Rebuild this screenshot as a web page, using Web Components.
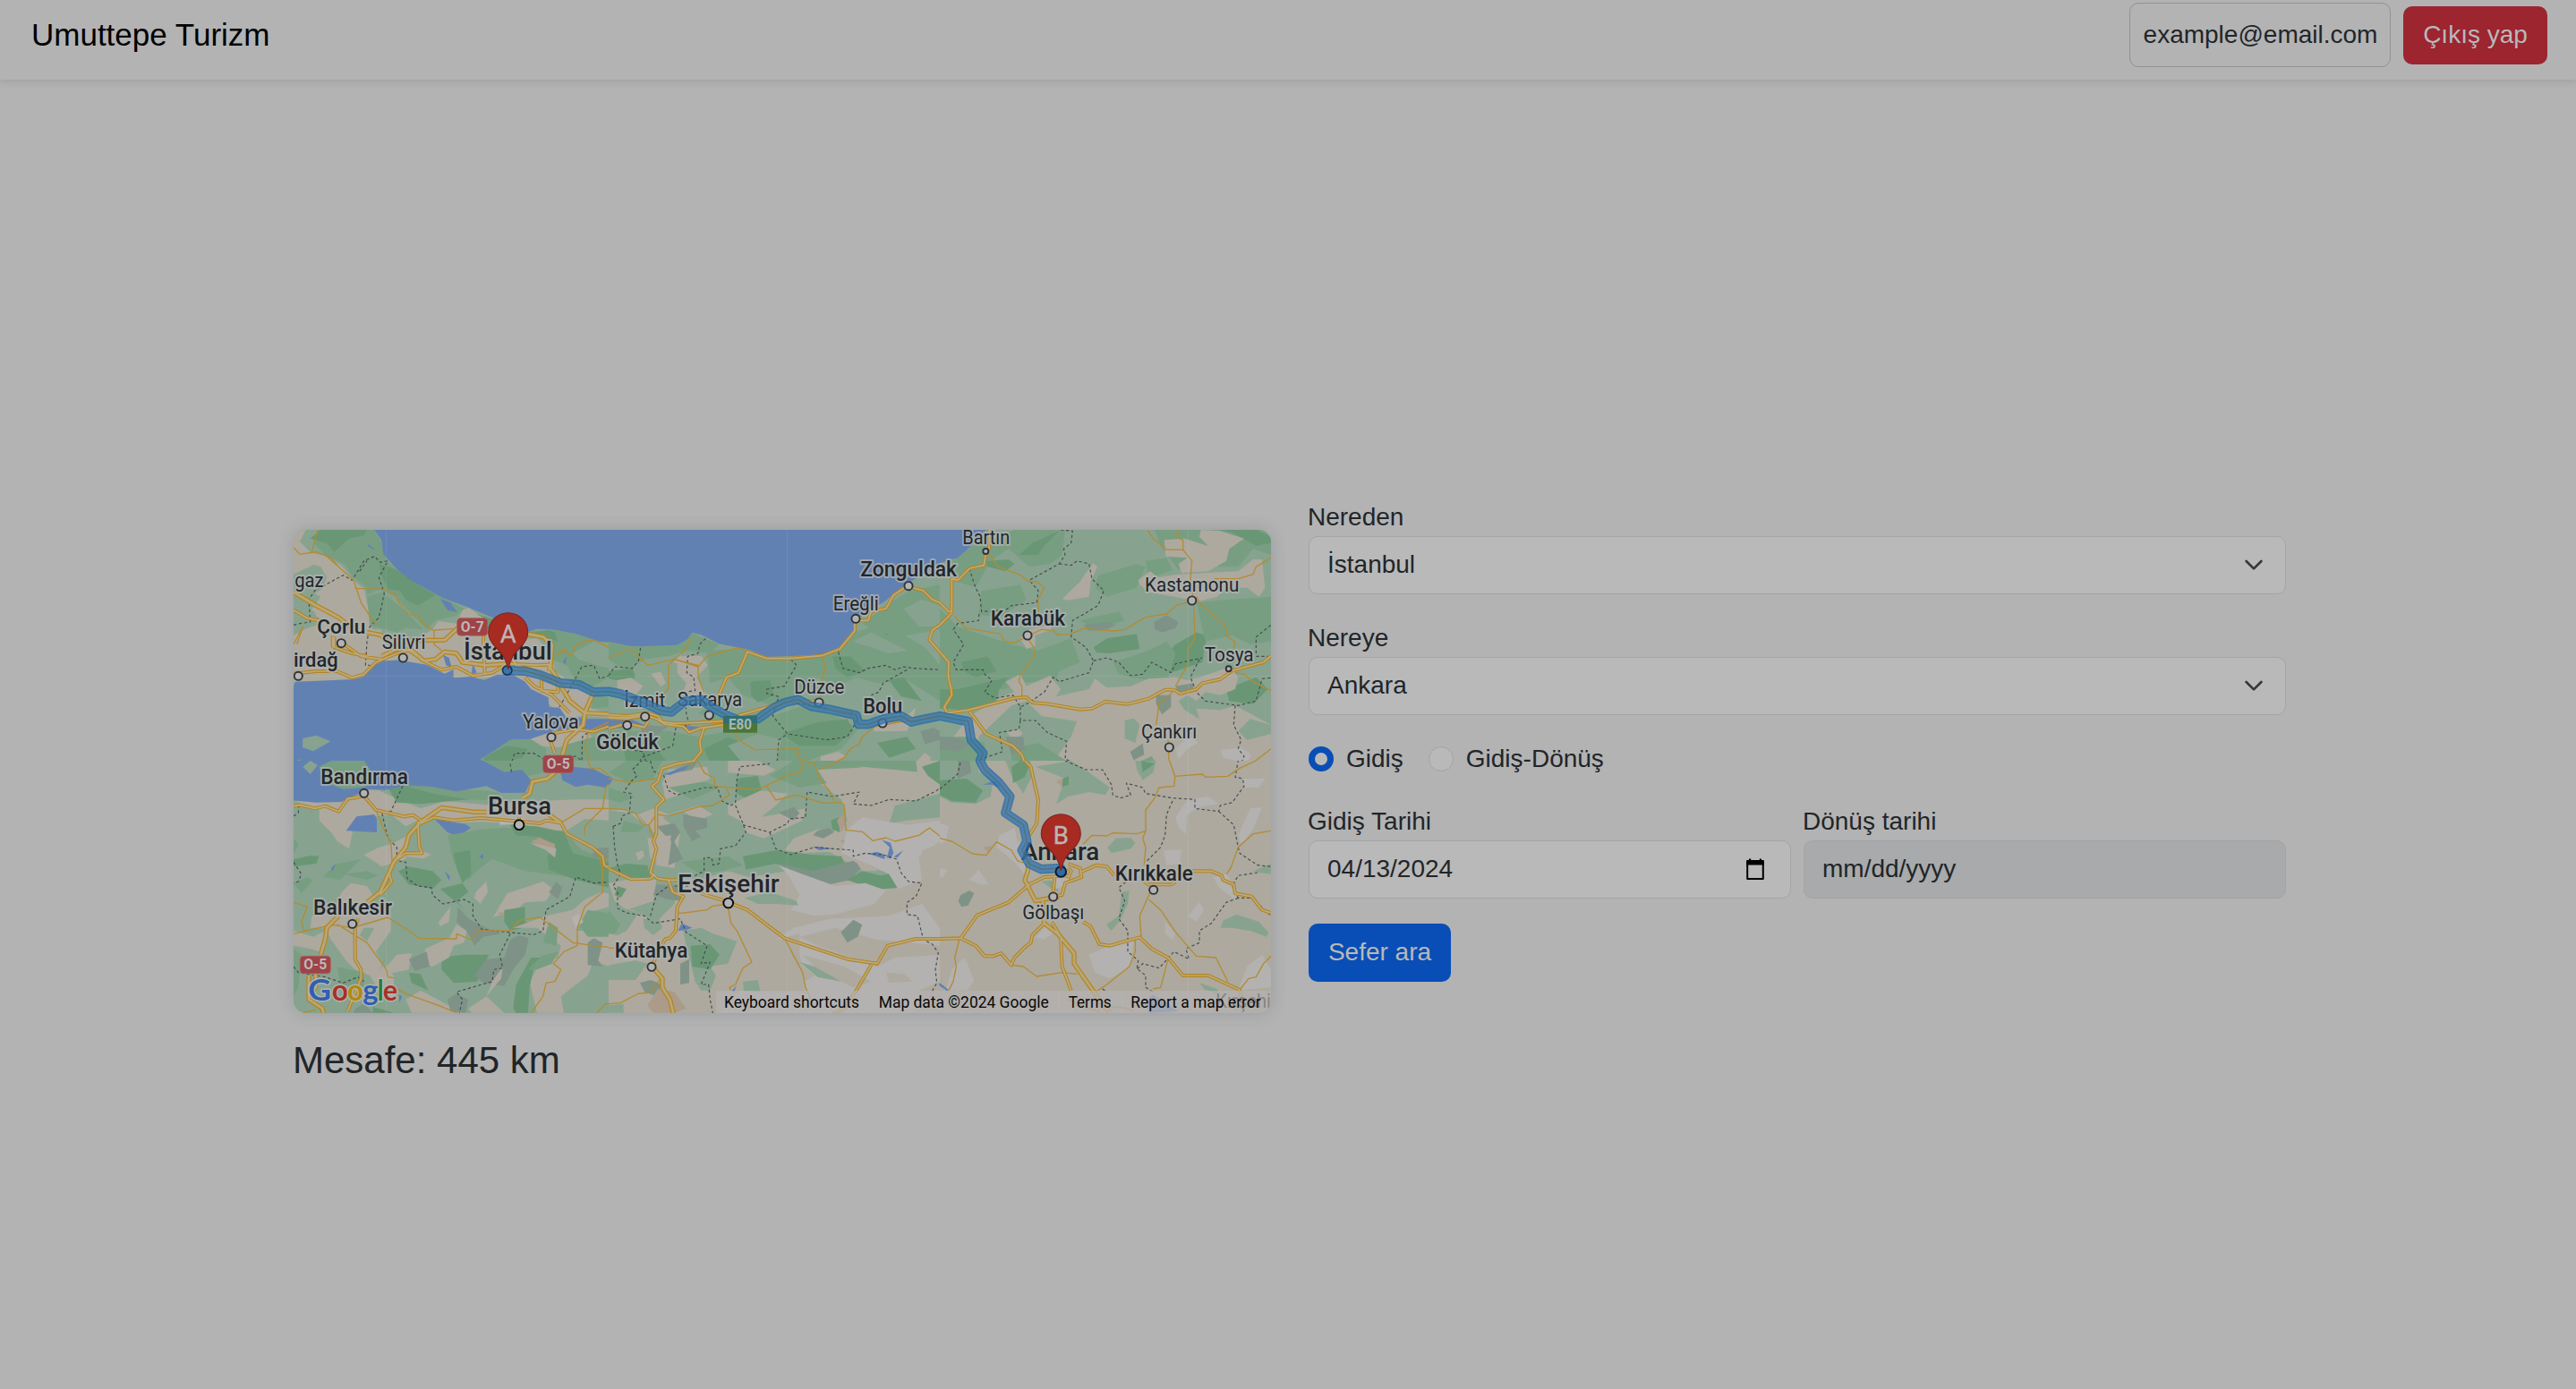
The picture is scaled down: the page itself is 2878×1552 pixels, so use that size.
<!DOCTYPE html>
<html lang="tr">
<head>
<meta charset="utf-8">
<title>Umuttepe Turizm</title>
<style>
html,body{margin:0;height:100%}
body{background:#b3b3b3;font:28px/42px "Liberation Sans",Arial,sans-serif;color:#212529;overflow:hidden}
</style>
</head>
<body>
<trip-page></trip-page>
<script>
const define = (name, html, after) => customElements.define(name, class extends HTMLElement {
  connectedCallback() {
    if (this.shadowRoot) return;
    const root = this.attachShadow({mode: 'open'});
    const t = document.createElement('template');
    t.innerHTML = html;
    root.append(t.content.cloneNode(true));
    if (after) after(root, this);
  }
});

define('ui-button', `<style>
:host{display:flex;align-items:center;justify-content:center;box-sizing:border-box;height:65px;padding-bottom:1px;border-radius:10px;background:var(--fill,#094eb6);color:#b9b9b9;white-space:nowrap}
</style><slot></slot>`);

define('app-navbar', `<style>
:host{display:flex;box-sizing:border-box;height:89px;padding:3px 32px 14px 35px;align-items:center;background:#b3b3b3;box-shadow:0 3px 8px rgba(0,20,10,.10)}
.brand{font-size:35px;color:#000;flex:1;white-space:nowrap}
.mail{box-sizing:border-box;width:292px;height:72px;border:1px solid #929292;border-radius:10px;display:flex;align-items:center;justify-content:center;padding-left:1px;margin-right:14px}
ui-button{--fill:#9c2530;width:161px}
</style><div class="brand">Umuttepe Turizm</div><div class="mail">example@email.com</div><ui-button>Çıkış yap</ui-button>`);

define('form-field', `<style>
:host{display:block;flex:1}
.label{box-sizing:border-box;height:43px;padding-top:1px;margin-left:-1px;white-space:nowrap}
.box{box-sizing:border-box;height:65px;border:1px solid #a3a4a5;border-radius:10px;background:#b9b9b9;display:flex;align-items:center;justify-content:space-between;padding:0 21px 2px 20px}
:host([disabled]) .box{background:#a8aaab;border-color:#a1a3a6}
:host([icon="date"]) .box{padding-right:25px}
svg{display:block;flex:none}
</style><div class="label"></div><div class="box"><slot></slot></div>`, (root, host) => {
  root.querySelector('.label').textContent = host.getAttribute('label');
  const box = root.querySelector('.box'), icon = host.getAttribute('icon');
  if (icon === 'chevron') box.insertAdjacentHTML('beforeend', '<svg width="28" height="21" viewBox="0 0 16 12"><path d="M3.2 4l4.800 4.800 4.800-4.800" fill="none" stroke="#33373b" stroke-width="1.500" stroke-linecap="round" stroke-linejoin="round"/></svg>');
  if (icon === 'date') box.insertAdjacentHTML('beforeend', '<svg width="28" height="28" viewBox="0 0 28 28"><path d="M5.2 5h17.6v20H5.2z" fill="none" stroke="#000" stroke-width="2" stroke-linejoin="round"/><path d="M4.2 4.500h19.6v5H4.200zM7 2.500h2.200v3H7zM18.800 2.500H21v3h-2.200z"/></svg>');
});

define('radio-option', `<style>
:host{display:flex;align-items:center;gap:14px;height:42px}
i{box-sizing:border-box;width:28px;height:28px;border-radius:50%;border:1px solid #a2a4a5;background:#b9b9b9}
:host([checked]) i{border:7.5px solid #094eb6}
</style><i></i><span><slot></slot></span>`);

define('trip-form', `<style>
:host{display:flex;flex-direction:column;width:1092px}
.gap{margin-top:27px}
.radios{display:flex;gap:28px;margin-top:28px}
.dates{display:flex;gap:14px}
ui-button{width:159px;margin-top:28px}
</style>
<form-field label="Nereden" icon="chevron">İstanbul</form-field>
<form-field class="gap" label="Nereye" icon="chevron">Ankara</form-field>
<div class="radios"><radio-option checked>Gidiş</radio-option><radio-option>Gidiş-Dönüş</radio-option></div>
<div class="dates gap"><form-field label="Gidiş Tarihi" icon="date">04/13/2024</form-field><form-field label="Dönüş tarihi" disabled>mm/dd/yyyy</form-field></div>
<ui-button>Sefer ara</ui-button>`);

/* Map tiles: three units of tile space make one page pixel.
   Fills: w water, a light green, g green, d dark green, t sand, l pale, s slate, o clay.
   Lines: H motorway, M main road, S minor road, B border. */
const C = {w:'#6281b3', a:'#87a38f', g:'#789e82', d:'#699775', t:'#ada99e', l:'#b3b2b0', s:'#7f9287', o:'#ab9b88'};
const TILES = [
{x:310,y:570,w:370,h:280,base:'a',f:`
t 54,66 95,66 75,105 110,142 165,155 215,185 255,235 290,265 305,330 318,400 345,400 370,460 430,455 520,400 540,372 600,380 620,335 640,328 700,365 740,375 740,440 870,430 920,480 930,540 1000,590 1060,620 1020,690 960,700 900,640 820,590 740,560 590,570 500,525 400,500 310,525 280,565 54,578 54,420 100,395 135,385 125,340 95,325 105,290 150,265 165,225 145,190 120,182 54,225
a 54,215 95,195 115,215 100,260 54,280
a 54,285 110,270 145,290 110,340 150,370 100,385 54,400
g 135,66 325,66 350,110 372,175 400,200 450,238 550,290 625,330 600,355 530,370 500,400 450,350 395,290 340,265 300,285 300,260 250,222 225,180 165,155 120,110
d 110,95 145,66 300,66 290,85 240,95 190,140 165,110
d 340,180 400,200 480,255 530,285 470,320 430,300 410,270 370,265 350,220
g 300,290 350,275 395,310 440,350 490,400 430,395 400,410 350,395 310,390
d 600,365 640,340 740,370 720,400 700,400 700,365
t 595,385 625,335 640,330 670,350 700,365 605,360
g 840,405 920,400 1000,415 1110,440 1110,560 1060,590 1000,575 970,520 920,500 915,430
d 850,410 910,402 930,410 940,440 900,430
a 990,480 1060,440 1110,445 1110,530 1070,520 1010,500
g 1050,610 1110,630 1110,660 1055,665
w 325,66 1110,66 1110,442 1080,440 1000,415 920,400 870,398 840,407 740,368 640,326 555,295 520,275 450,237 402,200 355,148 348,100
w 545,297 580,310 603,343 570,335
w 303,112 330,135 305,122
w 555,485 575,495 585,530 565,520
w 655,515 668,545 650,550
w 970,490 965,520 957,508
t 640,326 668,350 630,340
w 54,590 60,575 250,568 290,558 315,525 355,505 410,503 500,518 560,548 590,535 590,562 650,558 692,570 735,552 785,550 830,575 850,600 908,628 910,660 945,662 965,690 1010,695 1035,700 1110,700 1110,735 1040,738 930,738 850,768 780,770 735,805 680,835 700,850 54,850
t 1035,660 1110,680 1110,695 1030,690
t 845,768 930,740 1040,742 1060,770 940,795 880,790
g 780,770 850,768 900,800 900,845 700,850 682,835
d 690,830 745,800 770,790 840,800 820,830 740,850 700,850
g 955,790 1060,760 1110,800 1110,845 950,845
a 85,765 130,755 178,775 120,808 84,795
g 54,850 72,835 88,845 80,860
g 160,850 185,845 300,855 320,870`,
l:`
H 54,275 130,320 205,360 250,395
H 300,410 345,418 370,440 500,436 560,436 605,395 650,372
M 54,335 100,362 140,370
M 54,548 130,540 200,540 250,562 290,550 330,510 400,480 440,470 500,510 550,535 600,525 655,555 720,545 770,515 870,520
H 350,490 400,465 450,470 490,505 530,500 560,475 600,480 620,510 700,520 770,515
M 185,420 185,460 M
M 210,440 280,490 350,500
M 190,425 190,460 250,480 300,490
M 695,380 690,440 695,550
H 840,415 890,425 920,450 915,530 950,580
H 760,450 800,520 880,550 950,590 980,640 1030,680 1110,684
M 845,520 910,518 910,540
M 830,560 860,590 920,620 980,680
M 885,570 885,605 940,610 940,580
H 1060,610 1030,680 1025,720 970,770 955,820
M 1110,725 1060,742 1000,735 940,745 910,760 930,815
S 54,125 75,148 130,140 180,160 205,190 255,235 280,310 330,385
S 135,66 115,140
S 165,155 200,185
S 260,262 350,265 395,280 410,315 440,350 470,352 490,380 525,405 525,450 550,470
S 525,402 590,398
S 54,450 85,390 65,450
S 930,465 960,470 985,490 1000,455 1040,435 1070,440 1110,460
S 930,490 970,465
S 1110,710 1045,740 1030,790 1050,850
B 54,385 75,380 110,375 105,300 125,270 220,218 250,235 290,170 325,155 345,175 370,170 340,225 358,280 340,360 310,390 300,440 295,520 310,520
B 275,205 300,170
B 945,660 965,625 990,580 1020,525 1060,520 1080,565 1110,555
B 780,860 795,815 860,815 900,840 1000,825 1020,840 1022,760 1045,742`},
{x:680,y:570,w:370,h:280,base:'a',f:`
g 0,440 110,457 230,452 265,430 280,410 310,425 370,450 340,480 260,470 200,490 120,500 60,540 0,500
g 330,470 440,465 530,495 715,488 770,468 820,410 890,390 960,400 1060,460 1110,520 1110,640 1000,570 900,580 830,560 770,590 700,560 620,640 560,660 450,620 400,560 340,580
d 475,575 540,570 555,620 500,645 478,620
d 750,490 810,490 860,540 800,560 760,530
d 0,540 80,530 90,560 50,575 0,565
d 910,350 980,320 960,400 930,420
g 850,380 960,300 1010,270 1110,250 1110,400 1000,420 900,410
a 990,330 1050,300 1110,320 1110,390 1040,390
a 820,440 880,410 1000,470 940,480
d 940,570 990,560 1050,640 980,625
t 230,490 310,488 332,520 295,560 325,610 300,640 250,610 260,580 230,545
t 28,570 75,562 115,590 90,620 30,605
t 142,548 175,542 192,580 175,592
t 215,510 240,480 250,520
g 0,740 200,740 300,760 400,740 520,700 640,660 760,690 840,730 780,800 640,850 0,850
d 580,750 700,710 800,700 820,740 760,790 640,790
d 320,800 400,760 470,790 440,850 340,845
d 50,800 170,810 200,850 60,850
a 400,790 500,750 580,770 560,850 450,850
t 710,850 710,825 770,810 795,825 750,855
t 885,725 985,705 1030,660 1020,700 1000,740 890,742
t 860,860 910,858 920,870 860,870
t 1035,840 1060,812 1080,830 1070,870 1040,870
s 1045,740 1090,730 1110,740 1110,770 1060,785
s 110,720 200,725 150,760 110,750
g 300,680 360,640 400,690 390,720
d 900,780 1000,760 1030,800 940,830
w 0,66 1110,66 1110,180 1020,235 960,275 930,303 870,340 825,370 822,410 770,465 715,485 530,492 470,468 370,448 310,418 280,410 265,432 230,452 110,457 70,455 0,440
w 0,697 80,703 120,720 0,735
w 225,720 320,728 275,745`,
l:`
M 0,686 60,690 130,680 165,690 180,710 220,715 300,712 420,705
H 0,695 60,698 130,685
M 130,690 160,700 190,718 250,725 270,745 310,730 400,718 M
M 0,732 60,715 120,728 135,705
M 430,690 550,655 600,640 700,640 710,650
M 370,620 395,560 435,545 465,475 530,497 610,497 715,488 775,465 825,405 825,370 870,370 880,340 930,330 955,285 1000,255 1055,270 1085,300 1110,310 1130,335
M 1140,365 1085,402 1075,435 1110,475 1140,510
M 740,665 830,690
M 900,720 980,705 1110,690
M 320,730 305,775 310,810 280,845 180,865
S 0,495 75,465 130,520 220,500 300,525 330,490 430,462 465,470
S 270,430 260,465 200,520 200,600 180,620
S 220,500 300,520 300,560 320,610
S 420,745 450,780 490,803 630,800 640,810 630,820 660,850 700,850 710,868 790,830 810,800 840,785 850,760 900,720
S 715,488 728,525 715,560 710,640
B 0,555 20,525 80,530 100,505 108,455
B 325,430 305,450 300,480 265,490 262,545 285,560 290,605 255,610 260,680 270,720 225,730 215,790 110,830 90,870
B 130,860 115,810 60,800
B 610,500 630,520 605,560 590,590 530,600 530,615 570,625 550,690 600,750 730,770 800,760 830,710 820,680 590,640
B 440,862 500,862 565,840 570,770 600,750
B 770,475 785,530 840,545 870,530 930,520 960,535 990,525 1020,530 1110,535
B 1000,535 920,580 905,610 880,620`},
{x:1050,y:570,w:390,h:280,base:'a',f:`
g 30,180 110,120 160,110 250,66 420,66 410,150 370,180 300,190 230,130 170,170 120,260 60,240
d 155,170 230,165 250,180 220,205 160,190
d 265,150 310,110 400,70 350,120 330,150
g 420,90 560,66 720,66 740,120 800,200 850,190 1000,190 1050,130 1110,150 1110,66 560,66
g 530,220 660,180 690,190 660,260 560,290 520,260
g 140,270 270,250 290,300 200,360 130,350
g 470,370 600,340 620,370 520,400
g 0,330 60,390 240,450 330,470 440,430 470,510 400,540 390,570 250,580 220,600 0,620
d 0,600 60,600 230,560 200,600 190,640 100,670 0,665
d 70,510 160,490 190,540 120,560 80,540
d 515,460 560,430 660,415 670,465 570,480 525,478
d 790,450 860,410 895,420 880,510 790,540 700,560 740,500
g 580,510 700,470 760,440 790,480 760,580 640,560 600,550
g 860,310 960,300 1110,290 1110,440 1040,450 980,420 890,440
g 690,170 760,160 780,200 700,230
d 940,66 1060,66 1110,90 1110,110 1060,120 980,75
d 960,600 1060,560 1100,600 1050,650 970,640
t 752,100 820,95 900,120 870,90 875,66 940,70 1020,95 970,130 960,170 900,205 810,210 800,180 830,160 757,155
t 665,235 705,205 730,225 800,215 1000,205 1050,165 1080,165 1090,260 1070,290 1030,260 960,260 930,290 870,305 840,300 700,275 670,250
t 410,298 470,240 490,210 515,178 528,190 505,240 500,290 430,302
t 270,430 300,400 370,385 375,400 320,420 320,455 290,465
t 220,575 270,550 290,590 370,555 405,600 390,625 500,600 520,565 560,595 640,590 700,565 790,560 830,570 870,560 975,525 1000,560 990,600 940,620 890,610 860,640 830,620 800,640 820,670 870,700 860,665 940,670 990,655 1110,720 1110,850 0,850 0,820 100,690 220,620 250,610
a 130,760 240,655 290,640 340,690 460,708 440,760 390,830 300,850 130,850
g 0,760 90,760 150,780 160,850 0,850
g 240,800 330,780 440,850 240,870
t 225,745 265,733 278,750 248,772
s 0,758 60,765 100,785 60,810 0,800
s 480,385 560,375 590,385 560,400 500,405
s 718,375 760,352 800,375 790,395 745,410 720,400
s 725,620 775,620 775,660 745,685 725,650
s 790,590 850,580 850,610 800,615
s 220,760 280,760 285,800 240,820
d 240,845 275,835 305,850 300,870
a 620,705 650,698 670,720 655,780 620,765
g 655,850 710,825 725,850 700,870
s 638,810 680,782 685,820 650,838
a 1000,740 1040,700 1110,720 1110,750 1030,770
l 790,800 835,755 865,780 830,800 800,835
l 940,805 1010,795 1045,820 1030,850 950,830
w 0,66 155,66 105,120 60,160 0,178`,
l:`
M 155,140 148,185 100,195 60,235 40,230 40,340 30,340 0,310
M 40,345 0,385
M 165,66 165,130 155,140
M 0,475 30,510 28,555 38,600 40,620 15,660 25,680 95,670 250,630 290,627 310,645 365,650 470,668 510,665 555,642 630,650 700,632 755,602 785,602 805,615 860,600 880,580 940,567 980,538 1040,522 1085,510 1110,488
M 100,675 155,750 245,790 275,820 285,850 310,870
S 165,145 195,190 265,215 300,240 325,240 350,260 330,300 330,350
S 50,355 85,395 205,415 215,440 250,445 300,420 340,400 380,403 395,418 440,415 480,397 580,405 620,400 690,358 760,348 790,320 845,305
S 695,66 715,95 760,132 815,133 845,170 840,230 850,300 855,430 830,470 830,520 790,590
S 800,66 790,90 815,100 815,133
S 860,290 870,310 920,355 955,385 965,425 988,440 985,470
S 1110,160 1060,190 1050,215 1000,230 920,230
S 295,430 318,465 318,490 270,550 265,575 275,590 275,625
S 990,545 1020,550 1050,575 1110,605
S 780,610 735,650 725,720
S 765,770 768,845 785,870
S 1110,800 1030,862 1000,870
B 405,66 445,70 440,110 415,130 420,150 400,180 300,235 330,270 325,310 240,320 220,335 140,340 135,290 120,260 100,200
B 400,180 440,185 460,170 500,180 510,230 550,270 530,320 480,350 445,370 440,425 490,460 515,505 500,545 400,575 380,560 350,610 300,645 270,660 245,620 185,630 150,610 175,570 150,550 145,535 55,535 45,510 80,450 45,400 60,380 130,370 132,340
B 515,505 560,495 600,510 640,555 680,550 710,510 775,545 790,515 880,495
B 870,500 840,560 860,610 890,640 1000,655 1060,640 1080,565 1110,562
B 1060,490 1110,490
B 1060,480 1060,425 1110,385
B 990,655 985,720 1010,770 1000,800 1020,825 1000,870
B 270,660 270,705 320,705 360,745 425,775 420,835 530,870
B 270,705 265,735 200,745 210,810 150,830 60,870`},
{x:310,y:850,w:370,h:300,base:'a',f:`
g 690,0 890,0 900,40 840,50 760,40 700,20
t 54,135 130,138 200,130 290,98 340,100 385,120 480,160 560,135 730,150 740,105 760,140 1000,130 1110,130 1110,200 1030,195 960,240 800,210 680,205 560,210 500,185 430,220 380,180 300,190 260,200 240,295 200,270 180,240 140,200 140,160
d 370,90 440,80 520,90 620,105 640,130 480,145 400,140
g 430,85 560,90 740,105 760,135 640,130 520,110
t 255,60 290,90 250,110 200,120
w 54,0 690,0 760,38 820,30 850,65 830,107 750,108 700,85 600,103 520,88 430,80 400,90 360,98 310,95 270,112 215,138 130,140 54,133
a 110,0 135,15 110,45 85,20
g 140,20 180,0 290,0 310,30 320,60 290,90 220,95 150,70
w 945,25 990,20 1060,28 1122,60 1100,90 1040,80 1000,88 955,65
w 230,235 265,187 325,180 333,195 333,240
w 525,195 600,208 630,212 648,225 605,255 570,240
l 740,190 820,190 850,210 745,215
g 570,250 680,230 760,225 960,235 1020,300 1110,330 1110,400 980,390 830,370 720,330 680,360 640,400 590,340
d 780,215 870,220 960,240 990,310 1110,340 1110,425 1000,400 910,365 905,320 930,290 880,255 800,250
d 405,370 440,355 520,370 550,400 520,430 440,415
d 590,310 645,300 650,380 620,410 600,360
d 545,430 620,410 640,440 600,470 630,500
g 150,390 200,345 280,330 210,400 190,395
d 54,330 110,318 140,320 130,345 54,355
g 54,410 100,390 120,400 80,445
g 54,260 70,280 54,315
g 220,380 300,370 340,385 300,400
o 850,270 880,258 930,280 930,298 880,290
t 845,275 900,300 930,325 935,295 900,285
t 290,315 340,290 380,280 440,250 430,330 400,340 350,355
t 400,330 480,300 515,315 490,328 420,320
t 215,440 245,410 300,420 320,450 300,500 380,520 380,570 330,640 350,680 390,720 390,800 350,790 310,720 260,700 230,670 180,600 160,560 110,560 115,520 190,500
t 54,570 120,590 160,570 140,640 110,630 54,620
a 290,560 325,560 300,605 275,585
g 54,630 80,650 70,760 54,790
g 200,690 290,710 290,760 210,750
t 665,440 700,405 705,440 680,480 660,460
t 725,520 770,445 890,405 925,430 900,470 830,475 800,500 720,525
o 735,510 780,505 790,515 750,520
t 540,540 580,490 575,540 545,555
d 760,500 830,490 830,540 870,550 780,570 760,540
t 790,560 900,520 990,500 1030,465 1085,440 1110,445 1110,490 1040,510 1000,570 1110,570 1110,690 1060,670 1040,720 950,790 960,845 870,845 845,740 880,680 940,660 950,620 870,560
s 605,490 640,530 700,560 750,580 690,590 660,620 640,580 600,540
s 910,440 935,405 955,425 940,465
g 1010,550 1040,500 1110,510 1110,590 1040,590
g 890,610 910,540 940,560 935,620
l 985,525 1010,512 1025,540 1000,560
s 1040,610 1060,595 1090,610 1075,670 1090,690 1040,685
d 550,660 620,650 710,650 680,700 670,740 590,745 550,700
s 780,600 810,585 842,595 830,650 790,700 760,755 690,745 660,720 700,665 760,660
d 440,710 480,715 505,770 450,745
d 790,830 800,750 850,660 890,660 860,690 845,760 840,845 800,845
g 840,700 885,655 940,640 920,680 870,700
t 365,690 400,650 450,645 440,700 370,715
t 490,680 495,630 575,595 600,550 635,570 625,610 590,620 575,660 520,690
s 440,665 500,640 510,690 460,705
t 720,740 755,690 750,730 700,790
t 430,800 480,770 620,845 450,845
s 570,800 600,780 640,800 630,845 580,840
s 260,830 290,815 320,845 255,845
d 320,825 390,845 320,845
t 640,830 700,790 760,845 650,845
w 180,360 195,345 185,372
w 560,370 578,388 575,402
w 675,322 690,312 690,330
w 340,710 362,660 350,690
w 408,785 418,790 408,812
s 1060,295 1110,290 1110,330 1055,325`,
l:`
M 54,152 75,148 125,160 160,152 205,170 235,128 290,118 330,165 425,187 455,182 480,200
H 700,172 660,172 550,157 480,205 440,250 430,290 390,340 345,440 300,475
H 205,520 165,560 160,600 145,650 M
H 105,720 105,800 150,830 155,850
H 128,710 128,760 105,780
M 480,210 525,190 590,200 680,192 800,202 880,210 900,200 950,208
M 470,205 475,290 485,310 430,310 400,330
M 375,380 382,405 345,450
M 270,530 260,560 260,665 280,700 280,730 235,840
H 930,38 905,60 855,70 845,110 820,125
H 880,160 950,208
M 950,208 970,245 1055,290 1090,320 1095,350 1150,380
M 810,190 810,215
S 330,165 365,250 380,270 385,350
S 54,475 100,490 80,540 90,570
S 54,580 110,567 180,550 250,560 320,540 370,525 440,570 475,595 600,597 600,580 650,600 670,570 780,570 810,535 880,525 990,610 1060,620 1140,628
S 200,548 300,610 365,700 370,725 390,728
S 390,760 440,785 540,820 600,845
S 950,208 1030,160 1140,160
S 1030,250 1030,220 1090,160 1100,90 1125,60 1080,25 1050,25 1040,0
S 1070,300 1090,360 1090,440 1030,490 1005,560 1005,620 960,640 925,680 950,700 930,740 900,745 890,790 850,845
S 1140,815 1100,815 1070,845
S 85,845 130,835
B 54,185 70,175 72,140
B 54,340 80,380 70,405 54,410
B 420,85 380,170 350,175 370,260 400,290 400,335 430,340 435,395 470,420 515,425 520,450 555,480 625,465 655,480 655,520 685,565 720,570 860,583 890,570 900,500 980,455 1000,390 1060,410 1140,405
B 780,580 745,650 755,695 725,700 720,740 600,775 620,800 610,845
B 1140,210 1120,240 1140,330
B 54,690 70,710 100,715 160,725 220,745 270,725 290,740
B 780,10 785,40`},
{x:680,y:850,w:370,h:300,base:'t',f:`
a 0,0 660,0 700,70 780,130 800,200 750,240 700,230 620,260 590,300 640,310 740,305 800,340 960,380 960,430 800,400 600,370 470,390 400,370 320,395 240,395 220,480 160,540 80,500 0,500
t 200,30 330,20 340,60 250,110 190,130 180,75
g 0,90 90,120 40,140 0,130
g 50,200 120,220 100,240 40,240
g 0,40 60,0 180,0 150,60 70,75
s 240,20 300,0 280,30 200,45
t 0,165 60,165 120,215 100,180 150,160 200,180 300,150 350,180 300,200 250,170 180,190 240,240 220,360 160,350 160,250 100,180
d 430,60 500,50 515,110 460,125 430,110
t 400,150 510,100 600,110 560,150 510,190 440,200 400,180
t 440,200 560,180 660,160 650,200 520,260 460,240
g 200,90 320,70 370,90 280,130
g 540,50 620,0 780,0 900,40 830,60 640,90
t 500,0 560,30 520,50 400,40 400,0
t 700,30 900,20 900,65 820,90 740,90
g 730,0 1030,0 1035,40 900,30
t 850,20 1060,40 1090,20 1110,60 1050,120 900,120 850,70
d 1050,20 1110,0 1110,80 1070,50
a 960,150 1110,110 1110,190 1000,200 940,210
s 160,220 220,210 240,240 220,270 250,330 200,350 210,270
s 250,180 330,195 330,225 290,235 310,255 280,270 250,220
t 130,260 210,250 190,340 140,330
g 240,340 400,320 450,350 380,370 310,380
d 450,320 560,300 680,315 780,320 790,345 700,385 560,345 460,365
s 570,345 680,370 820,335 850,355 810,400 740,415 600,375
s 685,250 700,235 740,225 755,240 720,260
s 570,175 620,155 640,175 620,200
d 745,200 770,190 775,240 750,230
o 765,200 790,175 795,210 780,240
o 775,265 805,265 800,295
d 800,400 850,370 910,385 970,375 970,425 900,432 830,410
t 750,300 880,320 900,370 850,370 830,340
d 0,360 60,345 130,350 140,390 60,390
t 0,410 110,390 160,400 150,470 60,500 20,470
s 160,415 230,420 245,470 200,465 150,450
d 30,420 60,430 40,460 20,450
t 90,310 115,300 120,320 100,335
a 0,480 100,510 60,570 30,585 0,580
g 0,500 40,550 20,580 0,580
a 115,530 170,530 180,560 150,585 120,560
a 250,570 310,560 350,580 430,605 400,680 340,690 360,720 340,770 310,770 290,740 260,620
d 275,620 340,615 372,650 340,700 280,690
s 240,680 270,665 270,745 240,750
a 0,685 90,670 130,680 90,735 0,735
s 105,745 140,735 180,750 160,790 120,775
o 130,820 165,765 220,775 260,830 220,845 150,845
a 450,740 500,735 510,780 455,790
a 0,820 50,815 50,845 0,845
l 570,350 650,380 760,420 860,410 930,435 890,480 760,515 690,520 610,500 640,450 600,380
l 850,190 1000,215 1110,200 1110,270 1040,320 1050,400 970,430 940,380 880,350 780,310 800,230
t 1050,300 1110,280 1110,420 1050,420
l 740,530 940,520 1050,480 1110,560 1110,740 1040,770 1020,845 380,845 440,770 590,780 690,720 640,680 640,580 560,600 620,560
t 640,590 700,620 840,670 900,690 960,660 1110,650 1110,620 900,600 760,560
t 650,650 790,690 880,740 820,760 700,700
t 930,710 990,715 1020,740 940,745
t 440,600 560,600 640,640 660,780 560,770 480,680
a 455,460 540,440 630,470 635,485 560,480 500,480
s 778,575 820,533 850,550 835,590 800,610
a 640,675 690,690 780,740 700,725
w 185,45 270,15 255,30 205,48
w 232,570 245,545 280,560 260,568
w 0,50 15,60 0,85
w 685,288 705,288 750,295 705,300
w 870,312 900,305 925,315 925,330 890,318
w 915,265 945,275 955,310 945,328 932,325 942,290
w 955,322 988,300 968,325
w 412,772 428,755 420,778
w 1105,745 1140,770 1110,755`,
l:`
M 290,0 230,10 180,25 165,70 145,85 185,130 160,155 160,245 150,270 160,295 140,375 165,395 200,400 230,400
M 0,362 75,397 140,395 155,380
M 200,400 215,440 250,455 230,490 225,570 205,595 190,598 165,640 150,680
H 150,695 180,730 180,760 205,800 218,850
M 310,445 390,470 465,500 530,550 590,595 800,665 900,680 935,620 1030,597 1140,597
M 880,685 830,770 790,830 750,850
S 0,160 50,163 90,175 115,215 135,215 150,265
S 160,180 200,185 300,155 350,150 405,115 390,85
S 0,60 70,73 160,60
S 300,0 320,40 355,60 355,85 490,97 530,85 560,132 630,115 720,142 780,140 790,150 795,232 850,238 885,268 930,258 960,270 1040,250 1075,225 1130,268 1140,268
S 525,85 600,50 640,40 655,0 690,10 705,60 740,100 755,135
S 705,30 780,0
S 140,240 135,215 160,180
S 235,512 330,500 345,488 400,480
S 400,490 410,545 430,570 480,675 450,695 425,750 405,760 410,770
S 590,595 650,710 660,760 690,830
S 0,628 20,628
S 0,815 40,812 100,780 135,778 175,730
B 75,70 95,50 80,30 110,0 140,0 150,35 185,50 200,100 230,115 320,90 365,90 380,135 410,150 425,140 430,60 440,20 540,10
B 425,150 450,210 460,240 425,285 375,295 370,345 350,350 345,325 320,325 320,370 280,390
B 450,215 540,240 600,210 605,195 660,190 665,105 720,115 750,120 840,105 820,145 880,150 940,130 1030,135 1100,100 1120,80
B 540,240 560,295 610,315 690,290 820,300 820,320 860,310 920,315 965,330 980,375 1005,405 1050,410 1030,455 1000,475 1000,515 1035,520 1055,600 1085,615 1105,645 1095,700 1100,745 1080,780
B 15,220 40,210 45,185 70,175 75,110 50,105 75,70
B 15,220 20,290 30,350 40,380 15,420 30,440 30,495 60,510 120,520 150,545 240,530 260,575 330,620 310,680 340,675 310,750 335,750 340,800 350,850
B 140,520 160,450 200,420 270,420`},
{x:1050,y:850,w:390,h:300,base:'t',f:`
a 0,0 130,0 130,40 180,60 170,120 120,145 40,140 0,120
d 0,65 90,60 145,100 120,140 40,135 0,115
s 60,0 100,0 105,40 60,60
a 220,0 300,0 310,50 280,110 240,50
d 240,20 270,0 305,5 285,55 245,75
a 320,20 440,0 500,40 570,90 555,115 500,105 430,120 390,145 420,60
o 390,70 410,58 412,90
d 412,60 432,52 432,80 410,88
a 655,0 725,0 715,40 680,65 660,30
d 675,0 720,10 680,38
a 562,290 590,260 640,258 655,275 640,295 575,310
a 610,440 635,435 630,480 605,535 575,570 558,550 600,520
a 342,405 380,400 400,440 375,430
a 940,560 950,535 995,515 1070,540 1102,575 1095,590 1040,570 980,560
a 870,745 930,765 935,785 885,765
a 1050,370 1110,345 1110,380 1070,375
s 62,470 70,450 100,435 115,445 95,485 72,490
o 145,290 175,285 165,310
l 0,210 30,220 20,270 0,280
l 200,250 250,225 260,270 320,300 300,400 250,340 190,290
l 790,190 830,130 900,120 935,145 870,155 830,180 825,245 800,225
l 1000,250 1040,160 1080,155 1050,230 1010,280
l 750,300 810,298 805,345 760,350
l 1010,60 1090,60 1070,90 1020,90
l 320,590 370,540 390,570 350,600
l 370,390 430,380 440,410 390,430
l 500,650 570,620 620,610 650,590 640,690 570,730 520,710
l 915,390 960,380 1000,440 990,465 940,430
l 60,680 85,660 115,740 90,770 20,770 40,700
l 98,400 130,365 165,415 140,415
l 830,520 870,475 885,500 860,540
l 755,540 790,580 780,600 755,580
l 0,360 25,365 10,390 0,390
l 1030,690 1080,650 1110,700 1110,760 1000,770
w 145,80 185,65 205,90 190,88 175,80
w 0,745 30,768 25,772 0,755
w 695,800 715,785 800,840 700,845`,
l:`
M 285,0 305,20 320,90 330,130 325,210 300,250
H 300,290 295,370 285,400 320,470 400,455
M 0,597 70,595 125,518 230,475 300,415 350,390 430,385
M 70,595 120,620 150,655 180,655 205,645 240,685 250,660 285,625 305,610 310,585 350,545
H 345,470 350,545 395,580 450,645 450,680 520,780 540,810 570,845
M 375,540 405,590 410,690 440,770
M 385,390 380,440
M 430,345 470,360 475,390 420,410 410,450 370,455
M 430,360 440,370 430,395
M 475,372 525,350 560,355 585,385
M 840,370 910,370 945,385 950,400 985,415 990,445 1045,455 1080,500 1110,510
M 480,540 505,555 535,615 570,620 670,592 710,630 765,660 815,720 900,720 1005,768 1010,790
M 680,400 700,415 775,415 790,405
S 0,260 40,270 110,312 155,317 190,272 240,300 260,335 280,342
S 480,280 510,250 560,252 580,242 660,245 690,235 680,260 690,290 685,350
S 690,235 690,165 720,125 735,90 785,85 788,52 880,45 890,55 965,52 1005,25 1060,0
S 788,52 770,0
S 705,440 670,520 675,590
S 700,465 740,500 790,575 860,655 925,660 965,740
S 655,600 655,640 635,690 560,750 530,770 510,780
S 765,665 740,760 715,765
S 1110,235 1050,245 1000,290 975,360 960,380
S 1110,655 1085,680 1060,725 1035,730 1005,768
S 65,600 50,660 55,690 45,740 30,770
S 245,685 280,690 325,723 410,710 460,715
S 425,800 540,845
S 570,825 620,828 650,840
B 420,0 490,30 545,30 575,80 580,115 605,125 640,115 625,75 680,90 690,110 780,125 855,130 855,160 935,170 940,150 980,140 1020,85 1015,60 990,55 1000,0
B 935,170 985,215 1000,290 1005,310 1065,350 1110,355
B 1065,375 1000,385 980,420 1000,460 1045,460 1110,520
B 1000,460 960,475 910,545 870,570 870,610 825,630 835,665 785,640 735,695 680,680 660,700 665,670 630,640 630,570 600,530 620,470 600,425 625,405
B 780,135 760,180 755,250 740,290 690,340
B 0,95 60,45 70,0
B 665,700 690,720 690,760 715,775
B 545,765 560,775`}
];
const esc = s => s.replace(/&/g,'&amp;');
function tileSvg(t) {
  let fills = '', lines = {B:'',S:'',M:'',H:''};
  for (const row of t.f.trim().split('\n')) fills += `<polygon fill="${C[row[0]]}" points="${row.slice(2)}"/>`;
  for (const row of t.l.trim().split('\n')) {
    const p = row.slice(2).replace(/[A-Z]\s*$/,'').trim();
    lines[row[0]] += 'M' + p.split(' ').join('L');
  }
  const st = (d,c,w,x='') => `<path d="${d}" stroke="${c}" stroke-width="${w}" ${x}/>`;
  return `<svg x="${t.x}" y="${t.y}" width="${t.w}" height="${t.h}" viewBox="0 0 ${t.w*3} ${t.h*3}"><rect width="1200" height="900" fill="${C[t.base]}"/>${fills}<g fill="none" stroke-linejoin="round">`
    + st(lines.B,'#474c50',3.5,'stroke-dasharray="10 8"') + st(lines.S,'#b38b33',4)
    + st(lines.M,'#b48521',12) + st(lines.H,'#b48521',16) + st(lines.M,'#b9aa83',5) + st(lines.H,'#b9a775',8.5) + '</g></svg>';
}
const O = {A:[310,570],B:[680,570],C:[1050,570],D:[310,850],E:[680,850],F:[1050,850]};
const gx = (k,x) => (O[k][0]+x/3).toFixed(1), gy = (k,y) => (O[k][1]+y/3).toFixed(1);
const LABELS = [
['A','gaz',58,155,258,22,400],['A','Çorlu',133,295,413,22.5,500],['A','Silivri',350,496,465,22,400],['A','irdağ',54,203,524,22.5,500],['A','İstanbul',624,920,502,28,500],['A','Yalova',822,1010,731,22.5,400],['A','Gölcük',1068,1278,801,23.5,500],
['B','İzmit',52,190,661,22.5,400],['B','Sakarya',230,447,657,22.5,400],['B','Ereğli',752,905,336,22.5,400],['B','Zonguldak',844,1167,223,23.5,500],['B','Düzce',622,790,615,22.5,400],['B','Bolu',853,985,681,23.5,500],
['C','Bartın',76,235,114,22,400],['C','Kastamonu',687,1003,274,22.5,400],['C','Karabük',170,420,388,23.5,500],['C','Tosya',887,1052,508,22.5,400],['C','Çankırı',675,862,766,22.5,400],
['D','Bandırma',145,438,78,23.5,500],['D','Bursa',705,918,179,28,500],['D','Balıkesir',120,384,516,23.5,500],['E','Eskişehir',231,572,441,28.5,500],['E','Kütahya',20,265,660,23.5,500],
['F','Ankara',273,535,333,28,500],['F','Kırıkkale',587,848,401,23.5,500],['F','Gölbaşı',277,484,531,22.5,400]];
const DOTS = 'A214,446 A421,495 A70,556 A918,761 B122,692 B337,687 B62,721 B828,364 B1005,254 B705,645 B918,714 C154,138,s C294,420 C845,303 C968,532,s C769,795 D290,109 D810,215,b D251,547 E401,477,b E144,691 F380,456 F716,433 A770,537,r F406,372,r';
const ROUTE = [['A','770,537 830,540 880,552 950,580 1010,585 1060,610'],['B','0,608 40,616 110,642 175,672 210,677 255,641 310,635 345,660 400,690 440,706 500,700 550,665 590,645 635,635 680,658 740,668 830,688 838,718 870,718 920,700 980,690 1015,710 1060,700 1110,690'],['C','60,702 95,708 105,770 145,815 135,840'],['F','150,30 195,70 235,120 220,175 280,215 292,270 275,300 300,345 340,364 405,360']];
const text = (k,s,x0,x1,y,size,wt,extra='') => `<text x="${gx(k,x0)}" y="${gy(k,y)}" font-size="${size}" font-weight="${wt}" textLength="${((x1-x0)/3).toFixed(1)}" lengthAdjust="spacingAndGlyphs" ${extra}>${esc(s)}</text>`;
function shield(k,s,x,y) {
  return `<rect x="${gx(k,x)}" y="${gy(k,y)}" width="34" height="19.5" rx="4" fill="#9f4347" stroke="#a85d5f" stroke-width=".8"/>` + text(k,s,x+12,x+90,y+45,16,700,'fill="#bcb8b8"');
}
function pin(k,letter,x,tip) {
  return `<g transform="translate(${gx(k,x)} ${gy(k,tip)})"><path d="M0-1C-2-13-7.5-19.5-13.5-25.500C-18-30-22-35.500-22-42.300A22 22 0 0 1 22-42.300C22-35.500 18-30 13.500-25.500C7.500-19.500 2-13 0-1Z" fill="#a82b22" stroke="#80221f" stroke-width="1.1"/><text y="-31.500" text-anchor="middle" font-size="27.500" fill="#bbb5b4" stroke="#bbb5b4" stroke-width=".4">${letter}</text></g>`;
}
function mapSvg() {
  const d = 'M' + ROUTE.flatMap(([k,p]) => p.split(' ').map(q => { const [x,y] = q.split(','); return gx(k,+x)+','+gy(k,+y); })).join('L');
  let s = TILES.map(tileSvg).join('');
  s += '<path d="M431.500 592V1132M879.500 592V1132M1327.500 592V1132M328 755.500H1420" stroke="#fff" stroke-opacity=".07"/>';
  s += shield('A','O-7',602,362)+shield('A','O-5',890,822)+shield('D','O-5',76,655);
  s += '<g fill="#23262a" stroke="#aeb2b2" stroke-opacity=".8" stroke-width="4" stroke-linejoin="round" paint-order="stroke">' + LABELS.map(l => text(...l)).join('') + '</g>';
  s += DOTS.split(' ').map(q => { const k=q[0],[x,y,m]=q.slice(1).split(','); return m==='r' ? '' : `<circle cx="${gx(k,+x)}" cy="${gy(k,+y)}" r="${m==='s'?3:m==='b'?5.4:4.6}" fill="#b3b3b3" stroke="${m==='b'?'#090a0b':'#303236'}" stroke-width="1.9"/>`; }).join('');
  s += `<g fill="none" stroke-linejoin="round" stroke-linecap="round"><g opacity=".76"><path d="${d}" stroke="#2468a5" stroke-width="10.400"/><path d="${d}" stroke="#3678b3" stroke-width="7"/></g><path d="${d}" stroke="#496b73" stroke-opacity=".65" stroke-width="1.600"/></g>`;
  s += `<rect x="${gx('B',384)}" y="${gy('B',690)}" width="38" height="18.700" fill="#4c7536"/><rect x="${gx('B',384)}" y="${gy('B',690)}" width="38" height="8" fill="#286b87" fill-opacity=".75"/>` + text('B','E80',402,480,736,16,700,'fill="#a4b8b5"');
  s += `<circle cx="${gx('A',770)}" cy="${gy('A',537)}" r="5.200" fill="#3b74ab" stroke="#12375d" stroke-width="1.700"/><circle cx="${gx('F',406)}" cy="${gy('F',372)}" r="5.800" fill="#2e6aa6" stroke="#0a1a2d" stroke-width="2"/>`;
  s += pin('A','A',773,537)+pin('F','B',406,372);
  s += '<rect x="800" y="1107" width="620" height="25" fill="#b4b1b1" fill-opacity=".72"/><path d="M971 1107v25M1182.500 1107v25M1253.500 1107v25" stroke="#bbb" stroke-opacity=".4"/>';
  s += text('F','Kırşehi',925,1110,829,22,400,'fill="#55585b" fill-opacity=".5"');
  s += '<g fill="#080808">' + text('E','Keyboard shortcuts',387,840,828,17.5,400)+text('E','Map data ©2024 Google',905,1475,828,17.5,400)+text('F','Terms',431,575,828,17.5,400)+text('F','Report a map error',640,1076,828,17.5,400)+'</g>';
  const logo = [['G',103,180,'#315eb1'],['o',182,237,'#a93028'],['o',234,288,'#b4880c'],['g',286,338,'#315eb1'],['l',335,355,'#237d3a'],['e',353,402,'#a93028']];
  s += '<g font-family="Lato, sans-serif" stroke="#b9bbb7" stroke-width="3" stroke-opacity=".8" stroke-linejoin="round" paint-order="stroke">' + logo.map(([c,a,b,f]) => text('D',c,a,b,803,c==='G'?33:31.5,700,`fill="${f}"`)).join('') + '</g>';
  return `<svg viewBox="328 592 1092 540" width="1092" height="540" font-family="Roboto, sans-serif">${s}</svg>`;
}

define('route-map', `<style>
:host{display:block;width:1092px;height:540px;border-radius:14px;box-shadow:0 0 18px rgba(50,60,75,.2)}
div{border-radius:14px;overflow:hidden;height:540px}
svg{display:block}
</style><div></div>`, root => { root.querySelector('div').innerHTML = mapSvg(); });

define('trip-page', `<style>
:host{display:block;height:1552px}
main{display:flex;gap:42px;padding:467px 324px 0 328px;align-items:flex-start}
section{display:flex;flex-direction:column;gap:28px;padding-top:36px}
h4{margin:0 0 0 -1px;font:400 42px/50px "Liberation Sans",Arial,sans-serif}
</style>
<app-navbar></app-navbar>
<main><section><route-map></route-map><h4>Mesafe: 445 km</h4></section><trip-form></trip-form></main>`);
</script>
</body>
</html>
